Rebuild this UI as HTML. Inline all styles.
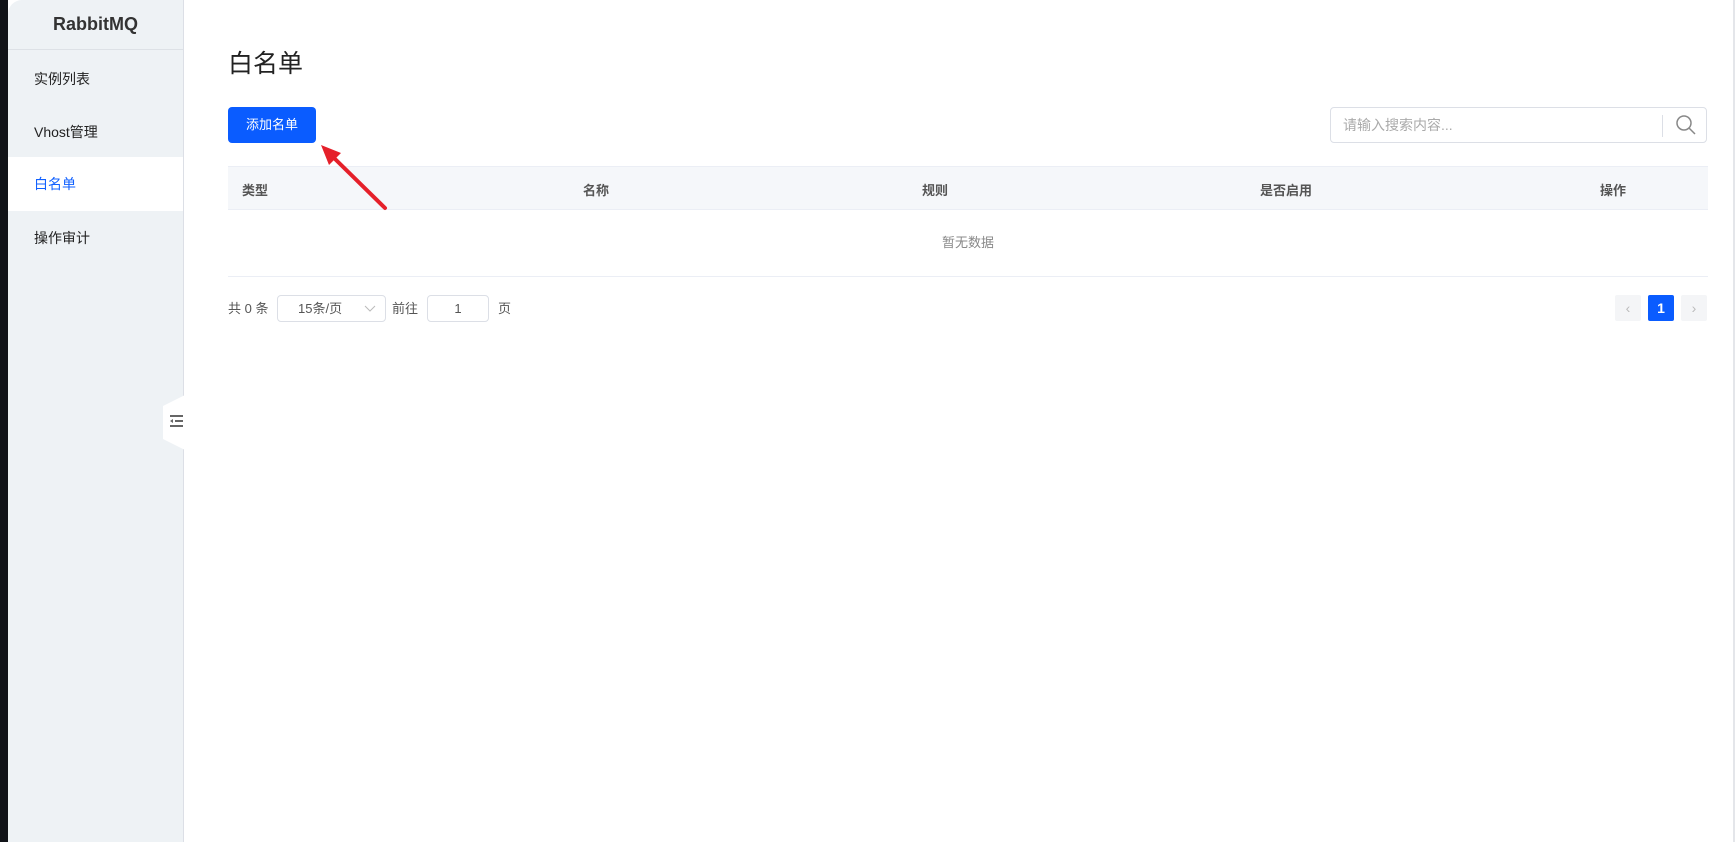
<!DOCTYPE html>
<html><head><meta charset="utf-8"><style>
*{box-sizing:border-box;margin:0;padding:0}
body{width:1735px;height:842px;overflow:hidden;background:#fff;font-family:"Liberation Sans","Noto Sans CJK SC",sans-serif;position:relative;color:#333}
.dark{position:absolute;left:0;top:0;width:8px;height:842px;background:#111318}
.side{position:absolute;left:8px;top:0;width:176px;height:842px;background:#eef2f5;border-right:1px solid #dcdfe6;border-top-left-radius:14px}
.logo{height:50px;border-bottom:1px solid #dde1e6;text-align:center;line-height:48px;font-weight:bold;font-size:18px;color:#333}
.mi{position:absolute;left:0;width:175px;height:54px;line-height:54px;padding-left:26px;font-size:14px;color:#222}
.mi.act{background:#fff;color:#1060ff}
.tab{position:absolute;left:163px;top:395px;width:22px;height:55px;background:#fff;clip-path:polygon(0 20%,100% 0,100% 100%,0 80%)}
.abs{position:absolute}
h1{position:absolute;left:228px;top:44px;font-size:25px;font-weight:normal;color:#222}
.btn{left:228px;top:107px;width:88px;height:36px;background:#0a5cff;color:#fff;border-radius:4px;font-size:13px;text-align:center;line-height:36px}
.search{left:1330px;top:107px;width:377px;height:36px;border:1px solid #dcdfe6;border-radius:4px;font-size:14px;color:#aaa;line-height:34px;padding-left:12px}
.th{left:228px;top:166px;width:1480px;height:44px;background:#f5f7fa;border-top:1px solid #ebeef5;border-bottom:1px solid #ebeef5}
.th span{position:absolute;top:13px;font-size:13px;font-weight:bold;color:#555}
.empty{left:228px;top:210px;width:1480px;height:67px;border-bottom:1px solid #ebeef5;text-align:center;line-height:66px;font-size:13px;color:#888}
.pg{font-size:13px;color:#555;top:295px;line-height:28px}
.box{border:1px solid #dcdfe6;border-radius:4px;height:27px;top:295px;line-height:26px;text-align:center;font-size:13px;color:#555}
.pb{top:295px;width:26px;height:26px;border-radius:2px;background:#f4f5f7;text-align:center;line-height:26px;color:#bbb;font-size:14px}
</style></head><body>
<div class="dark"></div>
<div class="side">
<div class="logo">RabbitMQ</div>
<div class="mi" style="top:52px">实例列表</div>
<div class="mi" style="top:105px">Vhost管理</div>
<div class="mi act" style="top:157px">白名单</div>
<div class="mi" style="top:211px">操作审计</div>
</div>
<div class="tab"></div>
<svg class="abs" style="left:169px;top:414px" width="15" height="14" viewBox="0 0 15 14"><g stroke="#666" stroke-width="2"><line x1="1" y1="2" x2="14" y2="2"/><line x1="6" y1="7" x2="14" y2="7"/><line x1="1" y1="12" x2="14" y2="12"/></g><path d="M4 5 L1 7 L4 9Z" fill="#666"/></svg>
<div class="abs" style="left:1733px;top:0;width:2px;height:842px;background:#e4e6ea"></div>
<h1>白名单</h1>
<div class="abs btn">添加名单</div>
<div class="abs search">请输入搜索内容...</div>
<div class="abs" style="left:1662px;top:115px;width:1px;height:22px;background:#dcdfe6"></div>
<svg class="abs" style="left:1675px;top:114px" width="22" height="22" viewBox="0 0 22 22"><circle cx="9" cy="9" r="7" fill="none" stroke="#888" stroke-width="1.5"/><line x1="14" y1="14" x2="20" y2="20" stroke="#888" stroke-width="1.5"/></svg>
<div class="abs th"><span style="left:14px">类型</span><span style="left:355px">名称</span><span style="left:694px">规则</span><span style="left:1032px">是否启用</span><span style="left:1372px">操作</span></div>
<div class="abs empty">暂无数据</div>
<div class="abs pg" style="left:228px">共 0 条</div>
<div class="abs box" style="left:277px;width:109px;text-align:left;padding-left:20px">15条/页</div>
<svg class="abs" style="left:364px;top:305px" width="12" height="8"><path d="M1 1 L6 6 L11 1" fill="none" stroke="#bbb"/></svg>
<div class="abs pg" style="left:392px">前往</div>
<div class="abs box" style="left:427px;width:62px">1</div>
<div class="abs pg" style="left:498px">页</div>
<div class="abs pb" style="left:1615px">‹</div>
<div class="abs pb" style="left:1648px;background:#0a5cff;color:#fff;font-weight:bold">1</div>
<div class="abs pb" style="left:1681px">›</div>
<svg class="abs" style="left:0;top:0" width="1735" height="842"><line x1="385" y1="208" x2="333" y2="157" stroke="#e5202a" stroke-width="4" stroke-linecap="round"/><path d="M321 145 L341 153 L329 165Z" fill="#e5202a"/></svg>
</body></html>
